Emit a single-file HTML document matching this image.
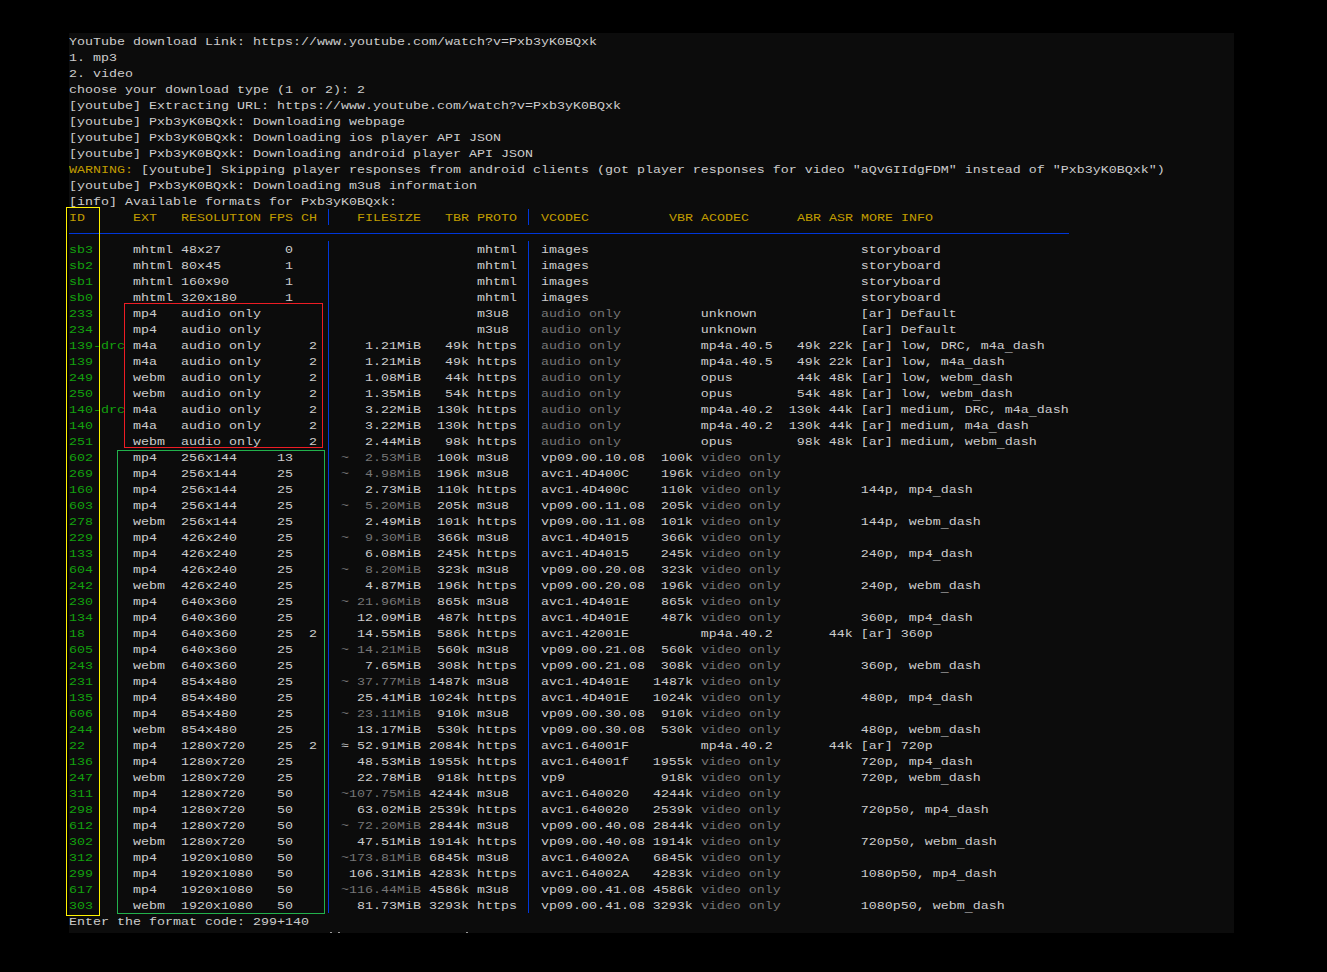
<!DOCTYPE html>
<html><head><meta charset="utf-8"><style>
html,body{margin:0;padding:0;background:#000;width:1327px;height:972px;overflow:hidden;}
#term{position:absolute;left:69px;top:33px;width:1165px;height:900px;background:#0c0c0c;overflow:hidden;}
.l{position:absolute;left:0;height:16px;line-height:16px;white-space:pre;font-family:"Liberation Mono",monospace;font-size:13.333px;color:#cccccc;transform:scaleY(0.82);transform-origin:0 11.55px;}
.s{position:absolute;top:0;}
.bx{position:absolute;}
.u{position:relative;top:3px;}
</style></head><body>
<div id="term">
<div class="l" style="top:1px">YouTube download Link: https://www.youtube.com/watch?v=Pxb3yK0BQxk</div>
<div class="l" style="top:17px">1. mp3</div>
<div class="l" style="top:33px">2. video</div>
<div class="l" style="top:49px">choose your download type (1 or 2): 2</div>
<div class="l" style="top:65px">[youtube] Extracting URL: https://www.youtube.com/watch?v=Pxb3yK0BQxk</div>
<div class="l" style="top:81px">[youtube] Pxb3yK0BQxk: Downloading webpage</div>
<div class="l" style="top:97px">[youtube] Pxb3yK0BQxk: Downloading ios player API JSON</div>
<div class="l" style="top:113px">[youtube] Pxb3yK0BQxk: Downloading android player API JSON</div>
<div class="l" style="top:129px"><span style="color:#c19c00">WARNING:</span> [youtube] Skipping player responses from android clients (got player responses for video &quot;aQvGIIdgFDM&quot; instead of &quot;Pxb3yK0BQxk&quot;)</div>
<div class="l" style="top:145px">[youtube] Pxb3yK0BQxk: Downloading m3u8 information</div>
<div class="l" style="top:161px">[info] Available formats for Pxb3yK0BQxk:</div>
<div class="l" style="top:177px"><span style="color:#c19c00">ID</span>      <span style="color:#c19c00">EXT</span>   <span style="color:#c19c00">RESOLUTION</span> <span style="color:#c19c00">FPS</span> <span style="color:#c19c00">CH</span>     <span style="color:#c19c00">FILESIZE</span>   <span style="color:#c19c00">TBR</span> <span style="color:#c19c00">PROTO</span>   <span style="color:#c19c00">VCODEC</span>          <span style="color:#c19c00">VBR</span> <span style="color:#c19c00">ACODEC</span>      <span style="color:#c19c00">ABR</span> <span style="color:#c19c00">ASR</span> <span style="color:#c19c00">MORE INFO</span></div>
<div class="l" style="top:209px"><span style="color:#13a10e">sb3</span>     mhtml 48x27        0                       mhtml   images                                  storyboard</div>
<div class="l" style="top:225px"><span style="color:#13a10e">sb2</span>     mhtml 80x45        1                       mhtml   images                                  storyboard</div>
<div class="l" style="top:241px"><span style="color:#13a10e">sb1</span>     mhtml 160x90       1                       mhtml   images                                  storyboard</div>
<div class="l" style="top:257px"><span style="color:#13a10e">sb0</span>     mhtml 320x180      1                       mhtml   images                                  storyboard</div>
<div class="l" style="top:273px"><span style="color:#13a10e">233</span>     mp4   audio only                           m3u8    <span style="color:#767676">audio only</span>          unknown             [ar] Default</div>
<div class="l" style="top:289px"><span style="color:#13a10e">234</span>     mp4   audio only                           m3u8    <span style="color:#767676">audio only</span>          unknown             [ar] Default</div>
<div class="l" style="top:305px"><span style="color:#13a10e">139-drc</span> m4a   audio only      2      1.21MiB   49k https   <span style="color:#767676">audio only</span>          mp4a.40.5   49k 22k [ar] low, DRC, m4a<span class="u">_</span>dash</div>
<div class="l" style="top:321px"><span style="color:#13a10e">139</span>     m4a   audio only      2      1.21MiB   49k https   <span style="color:#767676">audio only</span>          mp4a.40.5   49k 22k [ar] low, m4a<span class="u">_</span>dash</div>
<div class="l" style="top:337px"><span style="color:#13a10e">249</span>     webm  audio only      2      1.08MiB   44k https   <span style="color:#767676">audio only</span>          opus        44k 48k [ar] low, webm<span class="u">_</span>dash</div>
<div class="l" style="top:353px"><span style="color:#13a10e">250</span>     webm  audio only      2      1.35MiB   54k https   <span style="color:#767676">audio only</span>          opus        54k 48k [ar] low, webm<span class="u">_</span>dash</div>
<div class="l" style="top:369px"><span style="color:#13a10e">140-drc</span> m4a   audio only      2      3.22MiB  130k https   <span style="color:#767676">audio only</span>          mp4a.40.2  130k 44k [ar] medium, DRC, m4a<span class="u">_</span>dash</div>
<div class="l" style="top:385px"><span style="color:#13a10e">140</span>     m4a   audio only      2      3.22MiB  130k https   <span style="color:#767676">audio only</span>          mp4a.40.2  130k 44k [ar] medium, m4a<span class="u">_</span>dash</div>
<div class="l" style="top:401px"><span style="color:#13a10e">251</span>     webm  audio only      2      2.44MiB   98k https   <span style="color:#767676">audio only</span>          opus        98k 48k [ar] medium, webm<span class="u">_</span>dash</div>
<div class="l" style="top:417px"><span style="color:#13a10e">602</span>     mp4   256x144     13      <span style="color:#767676">~</span>  <span style="color:#767676">2.53MiB</span>  100k m3u8    vp09.00.10.08  100k <span style="color:#767676">video only</span></div>
<div class="l" style="top:433px"><span style="color:#13a10e">269</span>     mp4   256x144     25      <span style="color:#767676">~</span>  <span style="color:#767676">4.98MiB</span>  196k m3u8    avc1.4D400C    196k <span style="color:#767676">video only</span></div>
<div class="l" style="top:449px"><span style="color:#13a10e">160</span>     mp4   256x144     25         2.73MiB  110k https   avc1.4D400C    110k <span style="color:#767676">video only</span>          144p, mp4<span class="u">_</span>dash</div>
<div class="l" style="top:465px"><span style="color:#13a10e">603</span>     mp4   256x144     25      <span style="color:#767676">~</span>  <span style="color:#767676">5.20MiB</span>  205k m3u8    vp09.00.11.08  205k <span style="color:#767676">video only</span></div>
<div class="l" style="top:481px"><span style="color:#13a10e">278</span>     webm  256x144     25         2.49MiB  101k https   vp09.00.11.08  101k <span style="color:#767676">video only</span>          144p, webm<span class="u">_</span>dash</div>
<div class="l" style="top:497px"><span style="color:#13a10e">229</span>     mp4   426x240     25      <span style="color:#767676">~</span>  <span style="color:#767676">9.30MiB</span>  366k m3u8    avc1.4D4015    366k <span style="color:#767676">video only</span></div>
<div class="l" style="top:513px"><span style="color:#13a10e">133</span>     mp4   426x240     25         6.08MiB  245k https   avc1.4D4015    245k <span style="color:#767676">video only</span>          240p, mp4<span class="u">_</span>dash</div>
<div class="l" style="top:529px"><span style="color:#13a10e">604</span>     mp4   426x240     25      <span style="color:#767676">~</span>  <span style="color:#767676">8.20MiB</span>  323k m3u8    vp09.00.20.08  323k <span style="color:#767676">video only</span></div>
<div class="l" style="top:545px"><span style="color:#13a10e">242</span>     webm  426x240     25         4.87MiB  196k https   vp09.00.20.08  196k <span style="color:#767676">video only</span>          240p, webm<span class="u">_</span>dash</div>
<div class="l" style="top:561px"><span style="color:#13a10e">230</span>     mp4   640x360     25      <span style="color:#767676">~</span> <span style="color:#767676">21.96MiB</span>  865k m3u8    avc1.4D401E    865k <span style="color:#767676">video only</span></div>
<div class="l" style="top:577px"><span style="color:#13a10e">134</span>     mp4   640x360     25        12.09MiB  487k https   avc1.4D401E    487k <span style="color:#767676">video only</span>          360p, mp4<span class="u">_</span>dash</div>
<div class="l" style="top:593px"><span style="color:#13a10e">18</span>      mp4   640x360     25  2     14.55MiB  586k https   avc1.42001E         mp4a.40.2       44k [ar] 360p</div>
<div class="l" style="top:609px"><span style="color:#13a10e">605</span>     mp4   640x360     25      <span style="color:#767676">~</span> <span style="color:#767676">14.21MiB</span>  560k m3u8    vp09.00.21.08  560k <span style="color:#767676">video only</span></div>
<div class="l" style="top:625px"><span style="color:#13a10e">243</span>     webm  640x360     25         7.65MiB  308k https   vp09.00.21.08  308k <span style="color:#767676">video only</span>          360p, webm<span class="u">_</span>dash</div>
<div class="l" style="top:641px"><span style="color:#13a10e">231</span>     mp4   854x480     25      <span style="color:#767676">~</span> <span style="color:#767676">37.77MiB</span> 1487k m3u8    avc1.4D401E   1487k <span style="color:#767676">video only</span></div>
<div class="l" style="top:657px"><span style="color:#13a10e">135</span>     mp4   854x480     25        25.41MiB 1024k https   avc1.4D401E   1024k <span style="color:#767676">video only</span>          480p, mp4<span class="u">_</span>dash</div>
<div class="l" style="top:673px"><span style="color:#13a10e">606</span>     mp4   854x480     25      <span style="color:#767676">~</span> <span style="color:#767676">23.11MiB</span>  910k m3u8    vp09.00.30.08  910k <span style="color:#767676">video only</span></div>
<div class="l" style="top:689px"><span style="color:#13a10e">244</span>     webm  854x480     25        13.17MiB  530k https   vp09.00.30.08  530k <span style="color:#767676">video only</span>          480p, webm<span class="u">_</span>dash</div>
<div class="l" style="top:705px"><span style="color:#13a10e">22</span>      mp4   1280x720    25  2   ≈ 52.91MiB 2084k https   avc1.64001F         mp4a.40.2       44k [ar] 720p</div>
<div class="l" style="top:721px"><span style="color:#13a10e">136</span>     mp4   1280x720    25        48.53MiB 1955k https   avc1.64001f   1955k <span style="color:#767676">video only</span>          720p, mp4<span class="u">_</span>dash</div>
<div class="l" style="top:737px"><span style="color:#13a10e">247</span>     webm  1280x720    25        22.78MiB  918k https   vp9            918k <span style="color:#767676">video only</span>          720p, webm<span class="u">_</span>dash</div>
<div class="l" style="top:753px"><span style="color:#13a10e">311</span>     mp4   1280x720    50      <span style="color:#767676">~</span><span style="color:#767676">107.75MiB</span> 4244k m3u8    avc1.640020   4244k <span style="color:#767676">video only</span></div>
<div class="l" style="top:769px"><span style="color:#13a10e">298</span>     mp4   1280x720    50        63.02MiB 2539k https   avc1.640020   2539k <span style="color:#767676">video only</span>          720p50, mp4<span class="u">_</span>dash</div>
<div class="l" style="top:785px"><span style="color:#13a10e">612</span>     mp4   1280x720    50      <span style="color:#767676">~</span> <span style="color:#767676">72.20MiB</span> 2844k m3u8    vp09.00.40.08 2844k <span style="color:#767676">video only</span></div>
<div class="l" style="top:801px"><span style="color:#13a10e">302</span>     webm  1280x720    50        47.51MiB 1914k https   vp09.00.40.08 1914k <span style="color:#767676">video only</span>          720p50, webm<span class="u">_</span>dash</div>
<div class="l" style="top:817px"><span style="color:#13a10e">312</span>     mp4   1920x1080   50      <span style="color:#767676">~</span><span style="color:#767676">173.81MiB</span> 6845k m3u8    avc1.64002A   6845k <span style="color:#767676">video only</span></div>
<div class="l" style="top:833px"><span style="color:#13a10e">299</span>     mp4   1920x1080   50       106.31MiB 4283k https   avc1.64002A   4283k <span style="color:#767676">video only</span>          1080p50, mp4<span class="u">_</span>dash</div>
<div class="l" style="top:849px"><span style="color:#13a10e">617</span>     mp4   1920x1080   50      <span style="color:#767676">~</span><span style="color:#767676">116.44MiB</span> 4586k m3u8    vp09.00.41.08 4586k <span style="color:#767676">video only</span></div>
<div class="l" style="top:865px"><span style="color:#13a10e">303</span>     webm  1920x1080   50        81.73MiB 3293k https   vp09.00.41.08 3293k <span style="color:#767676">video only</span>          1080p50, webm<span class="u">_</span>dash</div>
<div class="l" style="top:881px">Enter the format code: 299+140</div>
<div class="bx" style="left:259px;top:176px;width:1px;height:16px;background:#0037da"></div>
<div class="bx" style="left:259px;top:208px;width:1px;height:672px;background:#0037da"></div>
<div class="bx" style="left:459px;top:176px;width:1px;height:16px;background:#0037da"></div>
<div class="bx" style="left:459px;top:208px;width:1px;height:672px;background:#0037da"></div>
<div class="bx" style="left:0px;top:200px;width:1000px;height:1px;background:#0037da"></div>
<div class="bx" style="left:261px;top:899px;width:2px;height:1px;background:#9a9a9a"></div>
<div class="bx" style="left:269px;top:899px;width:2px;height:1px;background:#9a9a9a"></div>
<div class="bx" style="left:397px;top:899px;width:2px;height:1px;background:#9a9a9a"></div>
</div>
<div style="position:absolute;left:66px;top:207px;width:34px;height:709px;border:1px solid #fff200;box-sizing:border-box"></div>
<div style="position:absolute;left:124px;top:303px;width:199px;height:145px;border:1px solid #ed1c24;box-sizing:border-box"></div>
<div style="position:absolute;left:117px;top:450px;width:208px;height:464px;border:1px solid #22b14c;box-sizing:border-box"></div>
</body></html>
